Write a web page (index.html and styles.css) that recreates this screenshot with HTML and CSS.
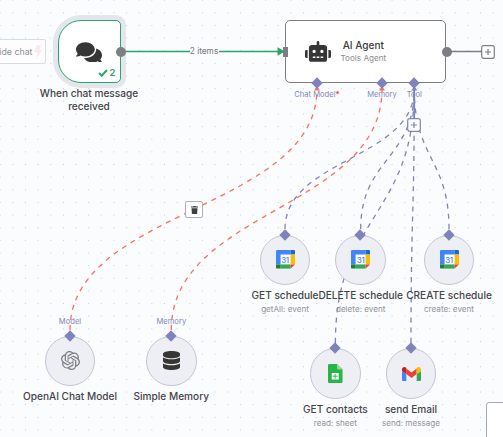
FILE: index.html
```html
<!DOCTYPE html>
<html lang="en">
<head>
<meta charset="utf-8">
<title>Workflow canvas</title>
<link rel="stylesheet" href="styles.css">
</head>
<body>
<svg class="defs" width="0" height="0" aria-hidden="true">
  <symbol id="calendar" viewBox="0 0 19 19">
    <path fill="#fff" d="M4 4h11v11H4z"/>
    <path fill="#4285f4" d="M1.2 0H14.6v4.6H4.6v9.8H0V1.2Q0 0 1.2 0z"/>
    <path fill="#1967d2" d="M14.6 0h3.2Q19 0 19 1.2v3.4h-4.4z"/>
    <path fill="#fbbc04" d="M14.6 4.6H19v9.8h-4.4z"/>
    <path fill="#34a853" d="M4.6 14.4h10V18.6h-10z"/>
    <path fill="#188038" d="M0 14.4h4.6v4.2H1.2Q0 18.6 0 17.4z"/>
    <path fill="#ea4335" d="M14.6 14.4H19l-4.4 4.2z"/>
  </symbol>
</svg>
<main class="canvas">
  <svg class="edges" width="503" height="437" viewBox="0 0 503 437">
    <path class="edge done" d="M121 51.5H279"/>
    <path class="edge-tip done-tip" d="M277.5 47.3L285 51.5L277.5 55.7Z"/>
    <path class="edge plain" d="M447 51.5H482"/>
    <g class="edge dashed failed">
      <path d="M70 330C70 209.5 317 209.5 317 89"/>
      <path d="M171.300 330C171.300 209.500 382 209.500 382 89"/>
    </g>
    <g class="edge dashed tool">
      <path d="M285 229C285 159 414.300 159 414.300 89"/>
      <path d="M360.700 229C360.700 159 414.300 159 414.300 89"/>
      <path d="M449 229C449 159 414.300 159 414.300 89"/>
      <path d="M335.400 343C335.400 216 414.300 216 414.300 89"/>
      <path d="M411 343C411 216 414.300 216 414.300 89"/>
    </g>
    <path class="edge solid-tool" d="M414.300 86V118"/>
    <path class="failed-tip" d="M314 90.500L317 86L320 90.500ZM379 90.500L382 86L385 90.500Z"/>
    <path class="tool-tip" d="M411.300 90.500L414.300 86L417.300 90.500Z"/>
  </svg>

  <div class="hide-chat"><span>ide chat</span><svg width="8" height="14" viewBox="0 0 8 14"><path d="M3 0h4L5.500 5H8L2 14l1.500-6.500H0z"/></svg></div>

  <section class="node trigger">
    <svg class="icon-chat" viewBox="0 32 576 448"><path d="M416 192c0-88.4-93.1-160-208-160S0 103.6 0 192c0 34.3 14.1 65.9 38 92-13.4 30.2-35.500 54.200-35.800 54.500-2.200 2.300-2.800 5.700-1.500 8.700S4.800 352 8 352c36.600 0 66.900-12.300 88.700-25 32.200 15.700 70.300 25 111.300 25 114.900 0 208-71.600 208-160zm122 220c23.900-26 38-57.700 38-92 0-66.900-53.500-124.200-129.300-148.100.9 6.600 1.300 13.300 1.300 20.100 0 105.900-107.700 192-240 192-10.800 0-21.300-.8-31.700-1.900C207.800 439.600 281.800 480 368 480c41 0 79.100-9.200 111.300-25 21.800 12.700 52.100 25 88.700 25 3.200 0 6.100-1.900 7.300-4.800 1.300-2.900.7-6.300-1.500-8.700-.3-.3-22.400-24.200-35.800-54.500z"/></svg>
    <div class="runs"><svg width="10" height="8" viewBox="0 0 10 8"><path d="M1 4l2.700 2.700L9 1"/></svg><span>2</span></div>
  </section>
  <h2 class="title trigger-title">When chat message<br>received</h2>
  <i class="dot dot-trigger"></i>
  <span class="items">2 items</span>

  <section class="node agent">
    <svg class="icon-robot" viewBox="0 0 640 512"><path d="M32 224H64V416H32A32 32 0 0 1 0 384V256A32 32 0 0 1 32 224Zm512-48V448a64 64 0 0 1-64 64H160a64 64 0 0 1-64-64V176a80 80 0 0 1 80-80H288V32a32 32 0 0 1 64 0V96H464A80 80 0 0 1 544 176ZM264 256a40 40 0 1 0-40 40A40 40 0 0 0 264 256Zm-8 128H192v32h64Zm96 0H288v32h64ZM456 256a40 40 0 1 0-40 40A40 40 0 0 0 456 256Zm-8 128H384v32h64ZM640 256V384a32 32 0 0 1-32 32H576V224h32A32 32 0 0 1 640 256Z"/></svg>
    <div class="agent-text"><h2 class="agent-title">AI Agent</h2><p class="agent-sub">Tools Agent</p></div>
  </section>
  <i class="input-port"></i>
  <i class="dot dot-agent"></i>
  <i class="diamond d-chat"></i><i class="diamond d-memory"></i><i class="diamond d-tool"></i>
  <span class="port p-chat">Chat Model<b>*</b></span>
  <span class="port p-memory">Memory</span>
  <span class="port p-tool">Tool</span>
  <span class="port p-model-out">Model</span>
  <span class="port p-memory-out">Memory</span>
  <svg class="plus plus-main" viewBox="0 0 14 14"><rect x=".7" y=".7" width="12.600" height="12.600" rx="2"/><path d="M4 7h6M7 4v6"/></svg>
  <svg class="plus plus-tool" viewBox="0 0 14 14"><rect x=".7" y=".7" width="12.600" height="12.600" rx="2"/><path d="M4 7h6M7 4v6"/></svg>
  <div class="trash"><svg width="7" height="8" viewBox="0 0 7 8"><path d="M0 .6h2L2.500 0h2L5 .6h2v1H0zM.5 2.200h6L6.100 8H.9z"/></svg></div>

  <article class="sub openai">
    <div class="disc"><i class="diamond"></i><svg class="icon-openai" viewBox="0 0 24 24"><path d="M22.2819 9.8211a5.9847 5.9847 0 0 0-.5157-4.9108 6.0462 6.0462 0 0 0-6.5098-2.9A6.0651 6.0651 0 0 0 4.9807 4.1818a5.9847 5.9847 0 0 0-3.9977 2.9 6.0462 6.0462 0 0 0 .7427 7.0966 5.98 5.98 0 0 0 .511 4.9107 6.051 6.051 0 0 0 6.5146 2.9001A5.9847 5.9847 0 0 0 13.2599 24a6.0557 6.0557 0 0 0 5.7718-4.2058 5.9894 5.9894 0 0 0 3.9977-2.9001 6.0557 6.0557 0 0 0-.7475-7.073zm-9.022 12.6081a4.4755 4.4755 0 0 1-2.8764-1.0408l.1419-.0804 4.7783-2.7582a.7948.7948 0 0 0 .3927-.6813v-6.7369l2.02 1.1686a.071.071 0 0 1 .038.052v5.5826a4.504 4.504 0 0 1-4.4945 4.4944zm-9.6607-4.1254a4.4708 4.4708 0 0 1-.5346-3.0137l.142.0852 4.783 2.7582a.7712.7712 0 0 0 .7806 0l5.8428-3.3685v2.3324a.0804.0804 0 0 1-.0332.0615L9.74 19.9502a4.4992 4.4992 0 0 1-6.1408-1.6464zM2.3408 7.8956a4.485 4.485 0 0 1 2.3655-1.9728V11.6a.7664.7664 0 0 0 .3879.6765l5.8144 3.3543-2.0201 1.1685a.0757.0757 0 0 1-.071 0l-4.8303-2.7865A4.504 4.504 0 0 1 2.3408 7.872zm16.5963 3.8558L13.1038 8.364 15.1192 7.2a.0757.0757 0 0 1 .071 0l4.8303 2.7913a4.4944 4.4944 0 0 1-.6765 8.1042v-5.6772a.79.79 0 0 0-.407-.667zm2.0107-3.0231l-.142-.0852-4.7735-2.7818a.7759.7759 0 0 0-.7854 0L9.409 9.2297V6.8974a.0662.0662 0 0 1 .0284-.0615l4.8303-2.7866a4.4992 4.4992 0 0 1 6.6802 4.66zM8.3065 12.863l-2.02-1.1638a.0804.0804 0 0 1-.038-.0567V6.0742a4.4992 4.4992 0 0 1 7.3757-3.4537l-.142.0805L8.704 5.459a.7948.7948 0 0 0-.3927.6813zm1.0976-2.3654l2.602-1.4998 2.6069 1.4998v2.9994l-2.5974 1.4997-2.6067-1.4997Z"/></svg></div>
    <h3 class="title">OpenAI Chat Model</h3>
  </article>
  <article class="sub memory">
    <div class="disc"><i class="diamond"></i><svg class="icon-db" viewBox="0 0 448 512" preserveAspectRatio="none"><path d="M448 73.143v45.714C448 159.143 347.667 192 224 192S0 159.143 0 118.857V73.143C0 32.857 100.333 0 224 0s224 32.857 224 73.143zM448 176v102.857C448 319.143 347.667 352 224 352S0 319.143 0 278.857V176c48.125 33.143 136.208 48.572 224 48.572S399.874 209.143 448 176zm0 160v102.857C448 479.143 347.667 512 224 512S0 479.143 0 438.857V336c48.125 33.143 136.208 48.572 224 48.572S399.874 369.143 448 336z"/></svg></div>
    <h3 class="title">Simple Memory</h3>
  </article>
  <article class="sub get">
    <div class="disc"><i class="diamond"></i><svg class="icon-cal"><use href="#calendar"/></svg><span class="day">31</span></div>
    <h3 class="title">GET schedule</h3><p class="note">getAll: event</p>
  </article>
  <article class="sub delete">
    <div class="disc"><i class="diamond"></i><svg class="icon-cal"><use href="#calendar"/></svg><span class="day">31</span></div>
    <h3 class="title">DELETE schedule</h3><p class="note">delete: event</p>
  </article>
  <article class="sub create">
    <div class="disc"><i class="diamond"></i><svg class="icon-cal"><use href="#calendar"/></svg><span class="day">31</span></div>
    <h3 class="title">CREATE schedule</h3><p class="note">create: event</p>
  </article>
  <article class="sub contacts">
    <div class="disc"><i class="diamond"></i><svg width="15" height="19" viewBox="0 0 15 19"><path fill="#28b446" d="M1.300 0H9l5.500 5.500v12.200q0 1.300-1.300 1.300H1.300Q0 19 0 17.700V1.300Q0 0 1.300 0z"/><path fill="#8fd9a0" d="M9 0l5.500 5.500H10Q9 5.500 9 4.500z"/><path fill="#fff" d="M3.700 9h7v6.500h-7z"/><path stroke="#28b446" stroke-width=".9" fill="none" d="M4.500 12.200h5.400M7.200 9.800v5"/></svg></div>
    <h3 class="title">GET contacts</h3><p class="note">read: sheet</p>
  </article>
  <article class="sub email">
    <div class="disc"><i class="diamond"></i><svg width="19" height="14" viewBox="0 0 19 14"><path fill="#4285f4" d="M0 4l4.300 3v7h-3Q0 14 0 12.700z"/><path fill="#34a853" d="M14.700 7L19 4v8.700q0 1.300-1.300 1.300h-3z"/><path fill="#ea4335" d="M4.300 1.500l5.200 3.900 5.200-3.900v5.600L9.500 11 4.300 7.100z"/><path fill="#c5221f" d="M0 2.400C0 .2 2.400-.7 4.300 .8v6.300L0 4z"/><path fill="#fbbc04" d="M19 2.400C19 .2 16.600-.7 14.700 .8v6.300L19 4z"/></svg></div>
    <h3 class="title">send Email</h3><p class="note">send: message</p>
  </article>
  <div class="corner-panel"></div>
</main>
</body>
</html>
```
FILE: styles.css
```css
* { box-sizing: border-box; }
body { margin: 0; font-family: Inter, "Liberation Sans", sans-serif; }
h2, h3, p { margin: 0; }
i, b { font-style: normal; }
.defs { position: absolute; }
.canvas {
  position: relative;
  width: 503px;
  height: 437px;
  overflow: hidden;
  background-color: #fbfcfe;
  background-image: radial-gradient(circle, #c9cbd3 0.55px, transparent 0.9px);
  background-size: 12.65px 12.65px;
  background-position: 6.5px 6.5px;
}
.edges { position: absolute; inset: 0; }
.edge { fill: none; stroke-width: 1.3; }
.done { stroke: #2aa567; }
.done-tip { fill: #2aa567; }
.plain { stroke: #7d7e82; }
.dashed { stroke-dasharray: 5.06 5.06; }
.failed { stroke: #ff6d5a; }
.failed-tip { fill: #ff6d5a; }
.tool, .solid-tool { stroke: #7f83bb; }
.solid-tool { stroke-width: 1.6; }
.tool-tip { fill: #7f83bb; }

.hide-chat {
  position: absolute;
  left: -20px;
  top: 39px;
  width: 66px;
  height: 25px;
  padding-right: 3px;
  display: flex;
  align-items: center;
  justify-content: flex-end;
  gap: 1.500px;
  border: 1px solid #dcdcdf;
  border-radius: 2px;
  background: #fdfdfe;
  color: #8f9094;
  font-size: 8.800px;
  white-space: nowrap;
}
.hide-chat path { fill: #fce9e9; }

.node { position: absolute; background: #fff; }
.trigger {
  left: 57.500px;
  top: 20px;
  width: 63px;
  height: 63px;
  border: 1.500px solid #2aa567;
  border-radius: 23px 5px 5px 23px;
  box-shadow: 0 0 0 5px #e4e6ee;
}
.icon-chat { position: absolute; left: 17.500px; top: 20.500px; width: 26px; height: 20.500px; fill: #363636; }
.runs {
  position: absolute;
  right: 4px;
  bottom: 3px;
  display: flex;
  align-items: center;
  gap: 1.500px;
  color: #2aa567;
  font-size: 9.500px;
  line-height: 12px;
  font-weight: 600;
}
.runs path { fill: none; stroke: #2aa567; stroke-width: 2; }
.title {
  color: #434448;
  font-size: 10.100px;
  font-weight: 500;
  line-height: 13px;
  text-align: center;
  white-space: nowrap;
}
.trigger-title { position: absolute; left: 29px; top: 87px; width: 120px; }
.dot { position: absolute; width: 10px; height: 10px; border-radius: 50%; background: #7d7e82; }
.dot-trigger { left: 115.500px; top: 46.500px; }
.dot-agent { left: 441.500px; top: 46.500px; }
.items {
  position: absolute;
  left: 189.500px;
  top: 46px;
  width: 29px;
  background: #fbfcfe;
  color: #76777c;
  text-align: center;
  font-size: 8.300px;
  line-height: 10px;
  white-space: nowrap;
}
.agent {
  left: 285px;
  top: 20px;
  width: 161px;
  height: 63px;
  display: flex;
  align-items: center;
  padding-left: 18.500px;
  gap: 10px;
  border: 1.300px solid #7d7e82;
  border-radius: 5px;
}
.icon-robot { width: 26px; height: 20.800px; fill: #363636; }
.agent-text { text-align: center; }
.agent-title { color: #3b3c40; font-size: 10.100px; line-height: 14px; font-weight: 500; }
.agent-sub { color: #8a8b90; font-size: 8.150px; line-height: 13px; }
.input-port { position: absolute; left: 282.500px; top: 46.500px; width: 5px; height: 10px; background: #7d7e82; }
.diamond { position: absolute; width: 8px; height: 8px; background: #7f83bb; transform: rotate(45deg); }
.d-chat { left: 313px; top: 79px; }
.d-memory { left: 378px; top: 79px; }
.d-tool { left: 410.300px; top: 79px; }
.port {
  position: absolute;
  width: 60px;
  color: #8286bf;
  text-align: center;
  font-size: 7.600px;
  line-height: 10px;
  white-space: nowrap;
}
.port b { color: #f33; }
.p-chat { left: 287px; top: 90px; }
.p-memory { left: 352px; top: 90px; }
.p-tool { left: 384.300px; top: 90px; }
.p-model-out { left: 40px; top: 317px; }
.p-memory-out { left: 141.300px; top: 317px; }
.plus { position: absolute; width: 14px; height: 14px; fill: #fff; stroke: #7d7e82; stroke-width: 1.200; }
.plus-main { left: 481px; top: 44.500px; }
.plus-tool { left: 407.300px; top: 117.500px; stroke: #7f83bb; }
.trash {
  position: absolute;
  left: 185px;
  top: 201px;
  width: 18px;
  height: 17px;
  display: grid;
  place-items: center;
  border: 1.300px solid #aeb0ba;
  border-radius: 2px;
  background: #fff;
}
.trash path { fill: #3d3e42; }

.sub { position: absolute; width: 120px; display: flex; flex-direction: column; align-items: center; }
.disc {
  position: relative;
  width: 50.600px;
  height: 50.600px;
  display: grid;
  place-items: center;
  border: 1.200px solid #c3c5d5;
  border-radius: 50%;
  background: #eeeff5;
  margin-bottom: 4px;
}
.disc .diamond { left: 20.100px; top: -5px; }
.note { margin-top: 1px; color: #929398; font-size: 8.150px; line-height: 13px; white-space: nowrap; }
.openai { left: 10px; top: 335.500px; }
.memory { left: 111.300px; top: 335.500px; }
.get { left: 225px; top: 234.500px; }
.delete { left: 300.700px; top: 234.500px; }
.create { left: 389px; top: 234.500px; }
.contacts { left: 275.400px; top: 348.300px; }
.email { left: 351px; top: 348.300px; }
.icon-openai { width: 19px; height: 19px; fill: #7b7c80; }
.icon-db { width: 17px; height: 19px; fill: #363636; }
.icon-cal { width: 19px; height: 19px; grid-area: 1 / 1; }
.day {
  grid-area: 1 / 1;
  z-index: 1;
  color: #4285f4;
  font-size: 8px;
  line-height: 10px;
  font-weight: 500;
  letter-spacing: -0.3px;
}
.corner-panel {
  position: absolute;
  left: 486px;
  top: 402px;
  width: 40px;
  height: 60px;
  border: 1px solid #a5a7b1;
  border-radius: 3px;
  background: #fff;
}
```
